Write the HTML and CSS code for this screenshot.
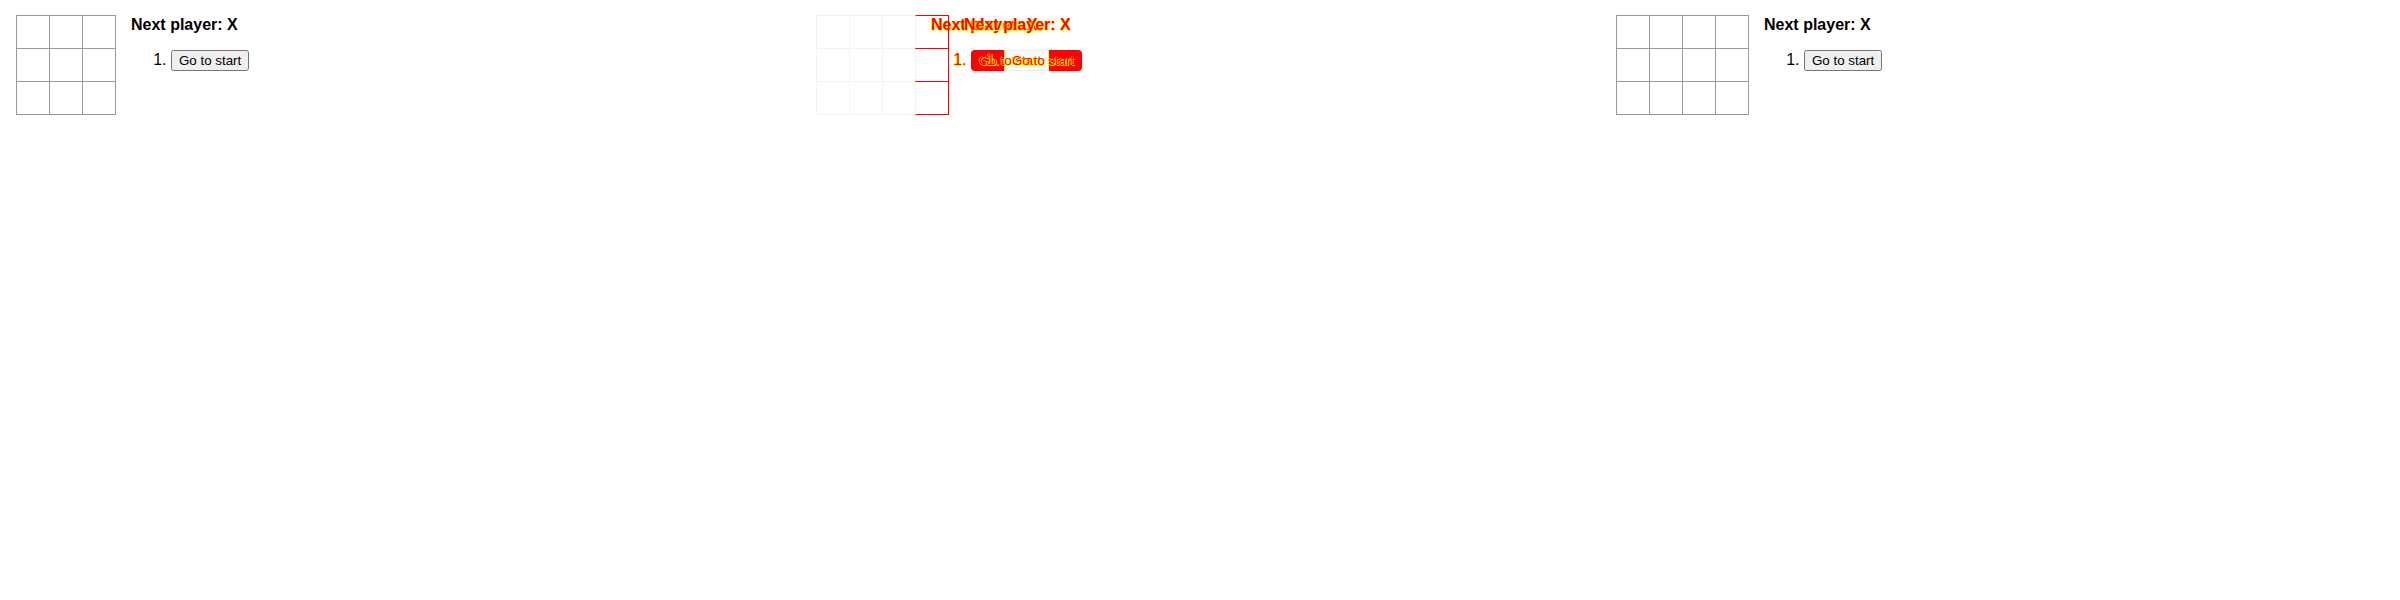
FILE: index.html
```html
<!DOCTYPE html>
<html lang="en">
<head>
<meta charset="utf-8">
<title>Tic-tac-toe visual diff</title>
<link rel="stylesheet" href="styles.css">
</head>
<body>
<main class="screen">
  <section class="panel">
    <div class="game">
      <div class="board">
        <div class="board-row"><div class="square"></div><div class="square"></div><div class="square"></div></div>
        <div class="board-row"><div class="square"></div><div class="square"></div><div class="square"></div></div>
        <div class="board-row"><div class="square"></div><div class="square"></div><div class="square"></div></div>
      </div>
      <div class="info">
        <div class="status">Next player: X</div>
        <ol class="moves"><li><button class="move-btn" type="button">Go to start</button></li></ol>
      </div>
    </div>
  </section>

  <section class="panel panel-diff">
    <div class="game">
      <div class="board board-faded">
        <div class="board-row"><div class="square"></div><div class="square"></div><div class="square"></div></div>
        <div class="board-row"><div class="square"></div><div class="square"></div><div class="square"></div></div>
        <div class="board-row"><div class="square"></div><div class="square"></div><div class="square"></div></div>
      </div>
      <div class="info diff-ink">
        <div class="status">Next player: X</div>
        <ol class="moves"><li><span class="btn-union"><span class="btn-label">Go to start</span></span></li></ol>
      </div>
    </div>
    <div class="layer-actual">
      <div class="game">
        <div class="board board-ghost">
          <div class="board-row"><div class="square"></div><div class="square"></div><div class="square"></div><div class="square square-new"></div></div>
          <div class="board-row"><div class="square"></div><div class="square"></div><div class="square"></div><div class="square square-new"></div></div>
          <div class="board-row"><div class="square"></div><div class="square"></div><div class="square"></div><div class="square square-new"></div></div>
        </div>
        <div class="info diff-ink">
          <div class="status">Next player: X</div>
          <ol class="moves"><li><span class="btn-ghost"><span class="btn-label">Go to start</span></span></li></ol>
        </div>
      </div>
    </div>
  </section>

  <section class="panel">
    <div class="game">
      <div class="board">
        <div class="board-row"><div class="square"></div><div class="square"></div><div class="square"></div><div class="square"></div></div>
        <div class="board-row"><div class="square"></div><div class="square"></div><div class="square"></div><div class="square"></div></div>
        <div class="board-row"><div class="square"></div><div class="square"></div><div class="square"></div><div class="square"></div></div>
      </div>
      <div class="info">
        <div class="status">Next player: X</div>
        <ol class="moves"><li><button class="move-btn" type="button">Go to start</button></li></ol>
      </div>
    </div>
  </section>
</main>
</body>
</html>
```

FILE: styles.css
```css
* { box-sizing: border-box; }

html, body {
  margin: 0;
  padding: 0;
  background: #fff;
}

body {
  font-family: "Liberation Sans", Arial, Helvetica, sans-serif;
  font-size: 16px;
  color: #000;
}

.screen {
  display: flex;
  width: 2400px;
  height: 600px;
}

.panel {
  flex: none;
  width: 800px;
  height: 600px;
  padding: 16px;
  position: relative;
  background: #fff;
}

.game {
  display: flex;
  flex-direction: row;
  align-items: flex-start;
}

.board-row {
  display: flex;
}

.square {
  flex: none;
  width: 34px;
  height: 34px;
  border: 1px solid #999;
  margin-right: -1px;
  margin-top: -1px;
}

.info {
  margin-left: 16px;
}

.status {
  font-weight: bold;
  margin-bottom: 10px;
}

.moves {
  margin: 16px 0;
  padding-left: 40px;
}

.move-btn {
  font-family: "Liberation Sans", Arial, Helvetica, sans-serif;
  font-size: 13.333px;
}

/* ---- diff panel ---- */
.board-faded .square {
  border-color: #f2f2f2;
}

.layer-actual {
  position: absolute;
  top: 0;
  left: 0;
  right: 0;
  bottom: 0;
  padding: 16px;
}

.board-ghost .square {
  border-color: transparent;
}

.board-ghost .square-new {
  border-color: #f00;
  border-left-color: transparent;
}

.diff-ink {
  color: #f00;
  text-shadow: -0.75px -0.5px 0 #ff0, 0.75px 0.5px 0 #ff0;
}

.btn-union,
.btn-ghost {
  display: inline-block;
  height: 21px;
  padding: 3px 8px 0;
  font-size: 13.333px;
  line-height: normal;
  white-space: nowrap;
  vertical-align: baseline;
}

.btn-union {
  width: 111px;
  border-radius: 4px;
  background:
    linear-gradient(#ececec, #ececec) 33px 0 / 45px 1px no-repeat,
    linear-gradient(#ececec, #ececec) 33px 20px / 45px 1px no-repeat,
    linear-gradient(#ff0, #ff0) 33px 1px / 1px 19px no-repeat,
    linear-gradient(#ff0, #ff0) 77px 1px / 1px 19px no-repeat,
    linear-gradient(to right, #f00 0 33px, #fcfcfc 33px 78px, #f00 78px);
}

.btn-ghost {
  width: 78px;
  background: transparent;
}
```
